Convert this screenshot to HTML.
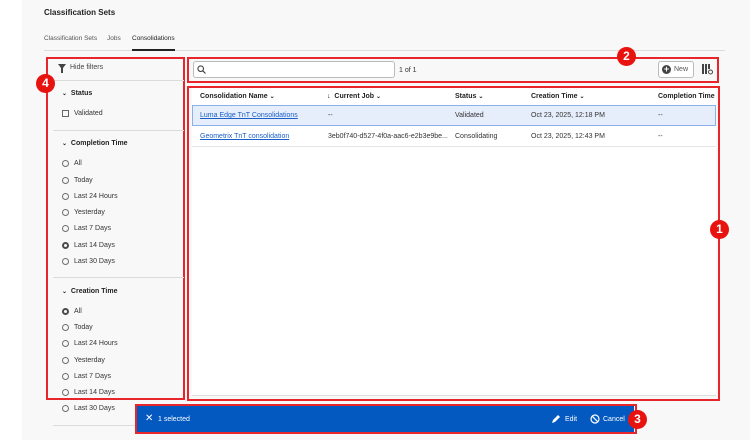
<!DOCTYPE html>
<html><head><meta charset="utf-8"><style>
*{box-sizing:border-box;margin:0;padding:0}
body{width:750px;height:444px;background:#fff;font-family:"Liberation Sans",sans-serif;color:#2c2c2c;position:relative;overflow:hidden;font-size:7px}
.a{position:absolute}
.bg{left:22px;top:0;width:728px;height:440px;background:#f8f8f8}
.red{border:2px solid #e8252a}
.badge{width:19px;height:19px;border-radius:50%;background:#e8120e;color:#fff;font-size:12px;font-weight:bold;text-align:center;line-height:19px}
.hr{height:1px;background:#dcdcdc}
.rad{width:7px;height:7px;border:1px solid #6e6e6e;border-radius:50%}
.rad.on{border:2.5px solid #4b4b4b}
.lbl{font-size:7px;color:#333}
.h{font-weight:bold;font-size:7px;color:#222}
.chev{font-size:6px}
a{color:#1a5fc8;text-decoration:underline}
</style></head><body>
<div class="a bg"></div>
<div class="a" style="left:44px;top:8px;font-size:8px;font-weight:bold;color:#222">Classification Sets</div>
<div class="a lbl" style="left:44px;top:35px;color:#555;font-size:6.5px">Classification Sets</div>
<div class="a lbl" style="left:107px;top:35px;color:#555;font-size:6.5px">Jobs</div>
<div class="a lbl" style="left:132px;top:35px;color:#222;font-size:6.5px">Consolidations</div>
<div class="a" style="left:44px;top:50px;width:681px;height:1px;background:#ddd"></div>
<div class="a" style="left:132px;top:49px;width:43px;height:2px;background:#222"></div>

<div class="a red" style="left:46px;top:57px;width:139px;height:343px"></div>
<svg class="a" style="left:58px;top:64px" width="8" height="9" viewBox="0 0 8 9"><path d="M0 0H8L5 4V9H3V4Z" fill="#444"/></svg>
<div class="a lbl" style="left:70px;top:64px;color:#444">Hide filters</div>
<div class="a hr" style="left:48px;top:80px;width:136px"></div>
<div class="a h" style="left:62px;top:90px"><span class="chev">⌄</span>&nbsp; Status</div>
<div class="a" style="left:62px;top:110px;width:7px;height:7px;border:1px solid #666"></div>
<div class="a lbl" style="left:74px;top:110px">Validated</div>
<div class="a hr" style="left:53px;top:130px;width:131px"></div>
<div class="a h" style="left:62px;top:140px"><span class="chev">⌄</span>&nbsp; Completion Time</div>
<div class="a rad" style="left:62px;top:160px"></div><div class="a lbl" style="left:74px;top:160px">All</div>
<div class="a rad" style="left:62px;top:177px"></div><div class="a lbl" style="left:74px;top:177px">Today</div>
<div class="a rad" style="left:62px;top:193px"></div><div class="a lbl" style="left:74px;top:193px">Last 24 Hours</div>
<div class="a rad" style="left:62px;top:209px"></div><div class="a lbl" style="left:74px;top:209px">Yesterday</div>
<div class="a rad" style="left:62px;top:225px"></div><div class="a lbl" style="left:74px;top:225px">Last 7 Days</div>
<div class="a rad on" style="left:62px;top:242px"></div><div class="a lbl" style="left:74px;top:242px">Last 14 Days</div>
<div class="a rad" style="left:62px;top:258px"></div><div class="a lbl" style="left:74px;top:258px">Last 30 Days</div>
<div class="a hr" style="left:53px;top:277px;width:131px"></div>
<div class="a h" style="left:62px;top:288px"><span class="chev">⌄</span>&nbsp; Creation Time</div>
<div class="a rad on" style="left:62px;top:308px"></div><div class="a lbl" style="left:74px;top:308px">All</div>
<div class="a rad" style="left:62px;top:324px"></div><div class="a lbl" style="left:74px;top:324px">Today</div>
<div class="a rad" style="left:62px;top:340px"></div><div class="a lbl" style="left:74px;top:340px">Last 24 Hours</div>
<div class="a rad" style="left:62px;top:357px"></div><div class="a lbl" style="left:74px;top:357px">Yesterday</div>
<div class="a rad" style="left:62px;top:373px"></div><div class="a lbl" style="left:74px;top:373px">Last 7 Days</div>
<div class="a rad" style="left:62px;top:389px"></div><div class="a lbl" style="left:74px;top:389px">Last 14 Days</div>
<div class="a rad" style="left:62px;top:405px"></div><div class="a lbl" style="left:74px;top:405px">Last 30 Days</div>
<div class="a hr" style="left:53px;top:425px;width:131px"></div>

<div class="a red" style="left:187px;top:57px;width:532px;height:26px"></div>
<div class="a" style="left:193px;top:61px;width:202px;height:17px;background:#fff;border:1px solid #bbb;border-radius:3px"></div>
<svg class="a" style="left:197px;top:65px" width="9" height="9" viewBox="0 0 9 9"><circle cx="3.7" cy="3.7" r="2.8" fill="none" stroke="#444" stroke-width="1.1"/><path d="M5.8 5.8L8.5 8.5" stroke="#444" stroke-width="1.2"/></svg>
<div class="a lbl" style="left:399px;top:67px">1 of 1</div>
<div class="a" style="left:658px;top:61px;width:36px;height:17px;background:#fff;border:1px solid #bbb;border-radius:3px"></div>
<div class="a" style="left:662px;top:65px;width:9px;height:9px;border-radius:50%;background:#444;color:#fff;font-size:9px;line-height:8px;text-align:center;font-weight:bold">+</div>
<div class="a lbl" style="left:674px;top:66px;color:#555">New</div>
<svg class="a" style="left:702px;top:64px" width="11" height="11" viewBox="0 0 11 11"><rect x="0" y="0" width="2" height="10" fill="#444"/><rect x="3" y="0" width="2" height="10" fill="#444"/><rect x="6" y="0" width="2" height="5" fill="#444"/><circle cx="8.5" cy="8" r="2" fill="none" stroke="#444"/></svg>

<div class="a red" style="left:187px;top:86px;width:533px;height:315px"></div>
<div class="a" style="left:192px;top:88px;width:524px;height:308px;background:#fff;border-bottom:1px solid #ddd"></div>
<div class="a h" style="left:200px;top:93px">Consolidation Name <span class="chev">⌄</span></div>
<div class="a h" style="left:327px;top:93px">↓ &nbsp;Current Job <span class="chev">⌄</span></div>
<div class="a h" style="left:455px;top:93px">Status <span class="chev">⌄</span></div>
<div class="a h" style="left:531px;top:93px">Creation Time <span class="chev">⌄</span></div>
<div class="a h" style="left:658px;top:93px">Completion Time</div>
<div class="a" style="left:192px;top:105px;width:524px;height:21px;background:#e6eefb;border:1px solid #8bb0ea"></div>
<div class="a lbl" style="left:200px;top:112px"><a>Luma Edge TnT Consolidations</a></div>
<div class="a lbl" style="left:328px;top:112px">--</div>
<div class="a lbl" style="left:455px;top:112px">Validated</div>
<div class="a lbl" style="left:531px;top:112px">Oct 23, 2025, 12:18 PM</div>
<div class="a lbl" style="left:658px;top:112px">--</div>
<div class="a lbl" style="left:200px;top:133px"><a>Geometrix TnT consolidation</a></div>
<div class="a lbl" style="left:328px;top:133px">3eb0f740-d527-4f0a-aac6-e2b3e9be...</div>
<div class="a lbl" style="left:455px;top:133px">Consolidating</div>
<div class="a lbl" style="left:531px;top:133px">Oct 23, 2025, 12:43 PM</div>
<div class="a lbl" style="left:658px;top:133px">--</div>
<div class="a hr" style="left:192px;top:146px;width:524px;background:#e6e6e6"></div>

<div class="a red" style="left:135px;top:404px;width:502px;height:30px"></div>
<div class="a" style="left:137px;top:406px;width:497px;height:26px;background:#0359c0"></div>
<div class="a" style="left:145px;top:413px;color:#fff;font-size:10px">✕</div>
<div class="a" style="left:158px;top:416px;color:#fff;font-size:7px">1 selected</div>
<svg class="a" style="left:552px;top:414px" width="9" height="9" viewBox="0 0 9 9"><path d="M0 9L1 6L6 1L8 3L3 8Z" fill="#fff"/></svg>
<div class="a" style="left:565px;top:416px;color:#fff;font-size:7px">Edit</div>
<svg class="a" style="left:590px;top:414px" width="10" height="10" viewBox="0 0 10 10"><circle cx="5" cy="5" r="4" fill="none" stroke="#fff" stroke-width="1.2"/><path d="M2.2 2.2L7.8 7.8" stroke="#fff" stroke-width="1.2"/></svg>
<div class="a" style="left:603px;top:416px;color:#fff;font-size:7px">Cancel</div>

<div class="a badge" style="left:36px;top:74px">4</div>
<div class="a badge" style="left:617px;top:47px">2</div>
<div class="a badge" style="left:710px;top:220px">1</div>
<div class="a badge" style="left:628px;top:410px">3</div>
</body></html>
